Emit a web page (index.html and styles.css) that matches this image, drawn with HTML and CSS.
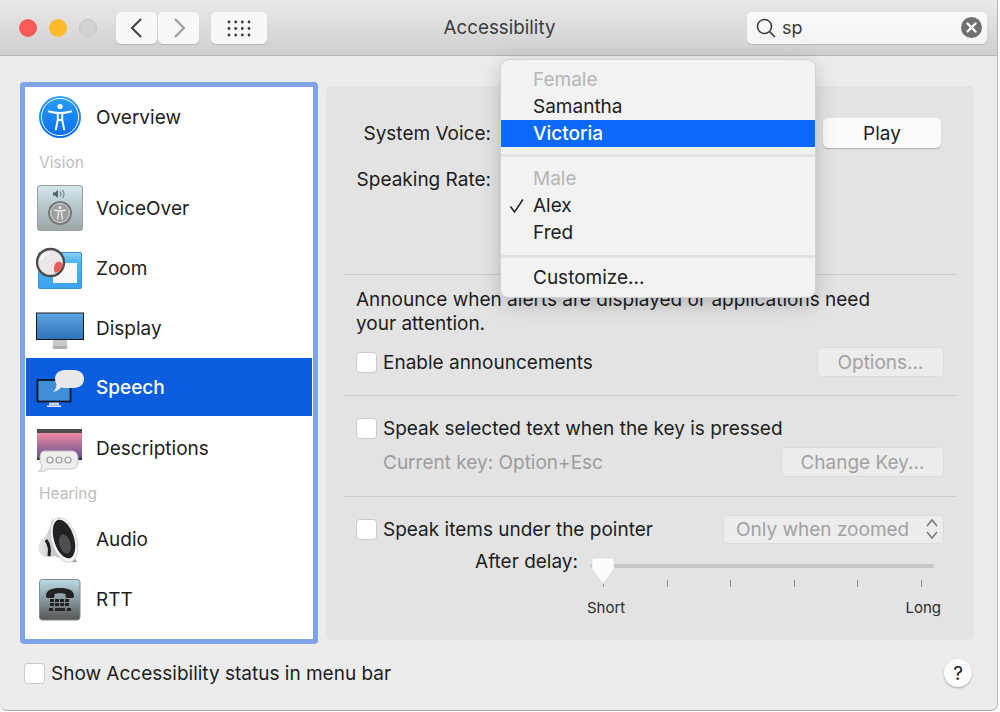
FILE: index.html
```html
<!DOCTYPE html>
<html lang="en">
<head>
<meta charset="utf-8">
<title>Accessibility</title>
<link rel="stylesheet" href="styles.css">
</head>
<body>
<div class="window">
  <header class="toolbar">
    <div class="lights"><span class="light red"></span><span class="light yellow"></span><span class="light gray"></span></div>
    <div class="nav">
      <button class="tool nav-btn"><svg width="16" height="22" viewBox="0 0 16 22"><path d="M12 2 3 11l9 9" class="chev"/></svg></button>
      <button class="tool nav-btn"><svg width="16" height="22" viewBox="0 0 16 22"><path d="M4 2l9 9-9 9" class="chev dim"/></svg></button>
    </div>
    <button class="tool grid-btn"><svg width="26" height="18" viewBox="0 0 26 18" class="dots"><circle cx="3" cy="3" r="1.4"/><circle cx="9.7" cy="3" r="1.4"/><circle cx="16.3" cy="3" r="1.4"/><circle cx="23" cy="3" r="1.4"/><circle cx="3" cy="9.5" r="1.4"/><circle cx="9.7" cy="9.5" r="1.4"/><circle cx="16.3" cy="9.5" r="1.4"/><circle cx="23" cy="9.5" r="1.4"/><circle cx="3" cy="16" r="1.4"/><circle cx="9.7" cy="16" r="1.4"/><circle cx="16.3" cy="16" r="1.4"/><circle cx="23" cy="16" r="1.4"/></svg></button>
    <div class="title">Accessibility</div>
    <div class="search">
      <svg width="22" height="22" viewBox="0 0 22 22"><circle cx="9.5" cy="9.5" r="7" class="lens"/><path d="M14.6 14.6 20 20" class="lens"/></svg>
      <span class="query">sp</span>
      <svg class="clear" width="21" height="21" viewBox="0 0 21 21"><circle cx="10.5" cy="10.5" r="10.5" fill="#6f6f6f"/><path d="M6.5 6.5l8 8M14.5 6.5l-8 8" stroke="#fff" stroke-width="2.4" stroke-linecap="round"/></svg>
    </div>
  </header>

  <main class="main">
    <nav class="sidebar">
      <div class="row">
        <svg class="icon" width="48" height="48" viewBox="0 0 48 48"><defs><linearGradient id="ov" x1="0" y1="0" x2="0" y2="1"><stop offset="0" stop-color="#2aa0f5"/><stop offset="1" stop-color="#0a6cf0"/></linearGradient></defs><circle cx="24" cy="24" r="21" fill="url(#ov)"/><circle cx="24" cy="24" r="18.6" fill="none" stroke="#fff" stroke-width="1"/><circle cx="24" cy="13.5" r="2.6" fill="#fff"/><path d="M13 18.500c4 1 7.500 1.500 11 1.500s7-.5 11-1.500M21.800 20v7l-2 9.500M26.200 20v7l2 9.500M21.800 27h4.400" fill="none" stroke="#fff" stroke-width="2" stroke-linecap="round"/></svg>
        <span>Overview</span>
      </div>
      <div class="group">Vision</div>
      <div class="row">
        <svg class="icon" width="48" height="48" viewBox="0 0 48 48"><defs><linearGradient id="vo" x1="0" y1="0" x2="0" y2="1"><stop offset="0" stop-color="#d3e5ec"/><stop offset="1" stop-color="#9aa5a8"/></linearGradient></defs><rect x="1.500" y="1.500" width="45" height="45" rx="2.500" fill="url(#vo)" stroke="#9a9fa1"/><path d="M17 8.500h2l3-2.500v8l-3-2.500h-2z" fill="#55626a"/><path d="M24 7.500a4 4 0 0 1 0 5M26.500 6a6.500 6.500 0 0 1 0 8" fill="none" stroke="#66737a"/><circle cx="24" cy="29" r="12" fill="#77797a"/><circle cx="24" cy="29" r="9.500" fill="#9b9d9e" stroke="#d8dadb"/><circle cx="24" cy="23.500" r="1.500" fill="#e8e8e8"/><path d="M18 26c4 1 8 1 12 0M22.500 27v3l-1 5.500M25.500 27v3l1 5.500" fill="none" stroke="#e8e8e8" stroke-width="1.400"/></svg>
        <span>VoiceOver</span>
      </div>
      <div class="row">
        <svg class="icon" width="48" height="48" viewBox="0 0 48 48"><defs><linearGradient id="zo" x1="0" y1="0" x2="0" y2="1"><stop offset="0" stop-color="#8fd0f4"/><stop offset=".25" stop-color="#52b5f2"/><stop offset="1" stop-color="#3aa2ec"/></linearGradient></defs><rect x="2.500" y="8.500" width="43" height="36" rx="1.500" fill="url(#zo)" stroke="#3590d4"/><rect x="17" y="19" width="24" height="20" fill="#f6f7f8"/><circle cx="14.500" cy="18.500" r="13.500" fill="#ebe6ea" stroke="#4c4c4c" stroke-width="2.400"/><path d="M21 18c4-1 6 1 5 5-1 3-3 5-7 6-2-4-1-9 2-11z" fill="#ea5b5b"/><path d="M5 16a10 10 0 0 1 8-7" fill="none" stroke="#fff" stroke-width="2"/></svg>
        <span>Zoom</span>
      </div>
      <div class="row">
        <svg class="icon" width="48" height="48" viewBox="0 0 48 48"><defs><linearGradient id="di" x1="0" y1="0" x2="0" y2="1"><stop offset="0" stop-color="#5ba6e4"/><stop offset="1" stop-color="#2f72b5"/></linearGradient></defs><rect x="0.500" y="9" width="47" height="26.500" fill="url(#di)" stroke="#16181c"/><rect x="17" y="36" width="14" height="9" fill="#c8c8c8"/><rect x="17" y="42" width="14" height="3" fill="#b0b0b0"/></svg>
        <span>Display</span>
      </div>
      <div class="row selected">
        <svg class="icon" width="48" height="48" viewBox="0 0 48 48"><rect x="1.500" y="16" width="33" height="21.500" fill="#3f8fd8" stroke="#0b1626" stroke-width="1.800"/><rect x="13" y="38.500" width="10" height="3" fill="#c6d3e6"/><rect x="11" y="41.500" width="14" height="1.500" fill="#e0e6f0"/><path d="M29 6h9c6 0 10 3.500 10 9s-4 9-10 9h-9c-1.500 0-3-.2-4-.7-1.500 2-4.500 4.200-8 4.700 2-2 3.500-4.500 3.500-7.500-.5-1.500-1.500-3.500-1.500-5.500C19 9.500 23 6 29 6z" fill="#e8e9ec"/></svg>
        <span>Speech</span>
      </div>
      <div class="row">
        <svg class="icon" width="48" height="48" viewBox="0 0 48 48"><defs><linearGradient id="de" x1="0" y1="0" x2="0" y2="1"><stop offset="0" stop-color="#f08aa0"/><stop offset="1" stop-color="#5e4f93"/></linearGradient></defs><rect x="1" y="5" width="45" height="4" fill="#4c4a4c"/><rect x="1" y="9" width="45" height="26" fill="url(#de)"/><rect x="1" y="34" width="45" height="2" fill="#2c2a30"/><path d="M9 27h27c4 0 6 3 6 9s-2 9-6 9H12c-3 2-7 3-10 3 2-1.500 3.500-3 4-5.500-1-2-2-4-2-6.500 0-6 1-9 5-9z" fill="#eeeeee" stroke="#c4c4c4"/><circle cx="14" cy="36" r="3" fill="none" stroke="#9a9a9a" stroke-width="1.200"/><circle cx="23" cy="36" r="3" fill="none" stroke="#9a9a9a" stroke-width="1.200"/><circle cx="32" cy="36" r="3" fill="none" stroke="#9a9a9a" stroke-width="1.200"/></svg>
        <span>Descriptions</span>
      </div>
      <div class="group hearing">Hearing</div>
      <div class="row">
        <svg class="icon" width="48" height="48" viewBox="0 0 48 48"><defs><linearGradient id="au" x1="0" y1="0" x2="1" y2="0"><stop offset="0" stop-color="#e8e8ea"/><stop offset="1" stop-color="#9a9ba0"/></linearGradient></defs><path d="M16 3C15 13 11 20 4 27c-3 4-2 11 3 14 4 2 9 1 12 0 6 3 14 7 22 6z" fill="url(#au)"/><path d="M10 25c3 4 4 10 3 16" fill="none" stroke="#1e1e20" stroke-width="3"/><ellipse cx="28" cy="25" rx="12.500" ry="23" transform="rotate(-17 28 25)" fill="#f5f5f7" stroke="#c8c8cc" stroke-width=".8"/><ellipse cx="28" cy="24" rx="10" ry="20" transform="rotate(-17 28 24)" fill="#212226"/><ellipse cx="29" cy="29" rx="5.500" ry="10" transform="rotate(-17 29 29)" fill="#4d4e54"/></svg>
        <span>Audio</span>
      </div>
      <div class="row">
        <svg class="icon" width="48" height="48" viewBox="0 0 48 48"><defs><linearGradient id="rt" x1="0" y1="0" x2="0" y2="1"><stop offset="0" stop-color="#b9dbe8"/><stop offset="1" stop-color="#555"/></linearGradient></defs><rect x="3.500" y="4.500" width="40.500" height="40.500" rx="3" fill="url(#rt)" stroke="#7c8a90"/><path d="M10 21c0-6 6-8 14-8s14 2 14 8c0 1.500-1 2-2.500 2h-4c-1.500 0-2-1-2-2v-2c-3-1-8-1-11 0v2c0 1-.5 2-2 2h-4C11 23 10 22.500 10 21z" fill="#222"/><g fill="#222"><rect x="14" y="24" width="4" height="3"/><rect x="19" y="24" width="4" height="3"/><rect x="24" y="24" width="4" height="3"/><rect x="29" y="24" width="4" height="3"/><rect x="14" y="28" width="4" height="3"/><rect x="19" y="28" width="4" height="3"/><rect x="24" y="28" width="4" height="3"/><rect x="29" y="28" width="4" height="3"/><rect x="13" y="33" width="4" height="3"/><rect x="19" y="33" width="10" height="3"/><rect x="31" y="33" width="4" height="3"/></g></svg>
        <span>RTT</span>
      </div>
    </nav>

    <section class="panel">
      <div class="section voice">
        <div class="form-row">
          <span class="form-label">System Voice:</span>
          <button class="btn play">Play</button>
        </div>
        <div class="form-row rate">
          <span class="form-label">Speaking Rate:</span>
        </div>
      </div>

      <div class="section announce">
        <p class="note">Announce when alerts are displayed or applications need<br>your attention.</p>
        <div class="check-row spaced">
          <span class="check"></span><span>Enable announcements</span>
          <button class="btn off options">Options...</button>
        </div>
      </div>

      <div class="section selected-text">
        <div class="check-row"><span class="check"></span><span>Speak selected text when the key is pressed</span></div>
        <div class="key-row">
          <span class="muted">Current key: Option+Esc</span>
          <button class="btn off change">Change Key...</button>
        </div>
      </div>

      <div class="section pointer">
        <div class="check-row">
          <span class="check"></span><span>Speak items under the pointer</span>
          <div class="select"><span>Only when zoomed</span><svg width="14" height="24" viewBox="0 0 14 24"><path d="M2 9l5-6 5 6M2 15l5 6 5-6" fill="none" stroke="#7c7c7c" stroke-width="1.600"/></svg></div>
        </div>
        <div class="delay-row">
          <span class="delay-label">After delay:</span>
          <div class="slider">
            <div class="track"></div>
            <svg class="thumb" width="24" height="28" viewBox="0 0 24 28"><path d="M3 1h18a2 2 0 0 1 2 2v9L12 27 1 12V3a2 2 0 0 1 2-2z" fill="#fcfcfc" stroke="#d8d8d8" stroke-width=".6"/></svg>
            <div class="ticks"><i></i><i></i><i></i><i></i><i></i><i></i></div>
            <div class="ends"><span>Short</span><span>Long</span></div>
          </div>
        </div>
      </div>
    </section>
  </main>

  <footer class="footer">
    <span class="check"></span><span>Show Accessibility status in menu bar</span>
    <button class="help">?</button>
  </footer>

  <div class="menu">
    <div class="item head">Female</div>
    <div class="item">Samantha</div>
    <div class="item active">Victoria</div>
    <div class="sep"></div>
    <div class="item head">Male</div>
    <div class="item"><svg class="tick" width="16" height="16" viewBox="0 0 16 16"><path d="M1.500 8.500l4 5.500L14 1.500" fill="none" stroke="#222" stroke-width="1.500"/></svg>Alex</div>
    <div class="item">Fred</div>
    <div class="sep second"></div>
    <div class="item">Customize...</div>
  </div>
</div>
</body>
</html>
```

FILE: styles.css
```css
* { box-sizing: border-box; }
html, body { margin: 0; padding: 0; background: #fff; }
body { font-family: Inter, "Liberation Sans", sans-serif; font-size: 19px; color: #1d1d1d; }
button { font-family: inherit; font-size: inherit; color: inherit; border: 0; padding: 0; }

.window {
  position: relative;
  width: 998px;
  height: 711px;
  display: flex;
  flex-direction: column;
  background: #ececec;
  border-right: 1px solid #b9b9b9;
  border-bottom: 1px solid #a9a9a9;
  border-radius: 0 0 7px 7px;
  overflow: hidden;
}

.toolbar {
  height: 56px;
  flex: none;
  display: flex;
  align-items: center;
  padding: 0 10px 0 19px;
  background: linear-gradient(#e9e9e9, #cfcfcf);
  border-bottom: 1px solid #b4b4b4;
  position: relative;
}
.lights { display: flex; gap: 12px; }
.light { width: 18px; height: 18px; border-radius: 50%; }
.red { background: #fb5a56; }
.yellow { background: #fdbb2c; }
.gray { background: #d2d2d2; border: 1px solid #c4c4c4; }
.nav { display: flex; gap: 1px; margin-left: 19px; }
.tool {
  height: 32px;
  background: #f8f8f8;
  border-radius: 5px;
  box-shadow: 0 1px 1px #b4b4b4;
  display: flex;
  align-items: center;
  justify-content: center;
}
.nav-btn { width: 41px; }
.grid-btn { width: 56px; margin-left: 12px; }
.chev { fill: none; stroke: #3f3f3f; stroke-width: 2; }
.chev.dim { stroke: #9b9b9b; }
.dots { fill: #3a3a3a; overflow: visible; }
.title {
  position: absolute;
  left: 0;
  right: 0;
  padding-left: 2px;
  text-align: center;
  pointer-events: none;
  font-size: 18.800px;
  color: #3b3b3b;
}
.search {
  margin-left: auto;
  width: 240px;
  height: 32px;
  background: linear-gradient(#fafafa, #f4f4f4);
  border-radius: 5px;
  box-shadow: 0 1px 1px #b4b4b4;
  display: flex;
  align-items: center;
  padding: 0 5px 0 8px;
}
.lens { fill: none; stroke: #3c3c3c; stroke-width: 1.600; }
.query { margin-left: 5px; color: #3a3a3a; font-size: 18px; }
.clear { margin-left: auto; }

.main {
  flex: none;
  display: grid;
  grid-template-columns: 298px 648px;
  column-gap: 8px;
  padding: 26px 0 0 20px;
}

.sidebar {
  height: 562px;
  background: #fff;
  border: 5px solid #80a4ec;
  border-radius: 4px;
}
.row {
  height: 60px;
  display: flex;
  align-items: center;
  padding-left: 11px;
  gap: 12px;
}
.row.selected {
  height: 58px;
  margin: 0 1px 2px;
  padding: 1px 0 0 10px;
  background: #0a5ddc;
  color: #fff;
  font-weight: 500;
}
.icon { flex: none; }
.group { height: 31px; line-height: 31px; padding-left: 14px; font-size: 15.500px; color: #bdbdbd; }

.panel {
  height: 554px;
  margin-top: 4px;
  padding: 0 17px 0 18px;
  background: #e3e3e3;
  border-radius: 5px;
}
.section { border-bottom: 1px solid #cdcdcd; padding-left: 12px; padding-right: 13px; }
.section.voice { height: 189px; padding-top: 32px; padding-left: 0; padding-right: 16px; }
.section.announce { height: 121px; padding-top: 13px; }
.section.selected-text { height: 101px; padding-top: 20px; }
.section.pointer { border-bottom: 0; padding-top: 17px; }
.form-row { display: flex; align-items: center; height: 30px; }
.form-row.rate { margin-top: 16px; }
.form-label { width: 147px; text-align: right; }
.note { margin: 0; line-height: 24px; }
.check-row { display: flex; align-items: center; height: 24px; }
.check-row.spaced { height: 30px; margin-top: 11px; }
.section.pointer .check-row { height: 30px; }
.check {
  flex: none;
  width: 21px;
  height: 21px;
  margin-right: 6px;
  border-radius: 4px;
  background: #fff;
  box-shadow: inset 0 0 0 1px #cbcbcb;
}
.key-row { display: flex; align-items: center; height: 30px; margin-top: 7px; padding-left: 27px; }
.muted { color: #9c9c9c; }
.btn {
  height: 30px;
  flex: none;
  margin-left: auto;
  background: #fbfbfb;
  border-radius: 5px;
  box-shadow: 0 1px 1px #aeaeae;
  text-align: center;
}
.btn.play { width: 118px; }
.btn.off {
  background: #ececec;
  color: #a2a2a2;
  box-shadow: inset 0 0 0 1px #dbdbdb;
}
.btn.options { width: 127px; }
.btn.change { width: 163px; }
.select {
  margin-left: auto;
  width: 221px;
  height: 29px;
  display: flex;
  align-items: center;
  justify-content: space-between;
  padding: 0 5px 0 13px;
  background: #ececec;
  color: #a2a2a2;
  border-radius: 5px;
  box-shadow: inset 0 0 0 1px #dbdbdb;
}
.delay-row { display: flex; margin-top: 2px; }
.delay-label { width: 222px; height: 32px; line-height: 32px; text-align: right; }
.slider { position: relative; width: 344px; margin-left: 12px; padding-top: 18px; }
.track { height: 4px; background: #c6c6c6; border-radius: 2px; }
.thumb { position: absolute; left: 1px; top: 11px; }
.ticks { display: flex; justify-content: space-between; height: 7px; margin-top: 12px; padding: 0 12px 0 13px; }
.ticks i { width: 1px; background: #8d8d8d; }
.ends {
  display: flex;
  justify-content: space-between;
  margin: 12px -7px 0 -3px;
  font-size: 15px;
  line-height: 17px;
  color: #2c2c2c;
}

.footer {
  flex: 1;
  display: flex;
  align-items: center;
  padding: 0 25px 8px 24px;
}
.help {
  margin-left: auto;
  width: 28px;
  height: 28px;
  border-radius: 50%;
  background: #fdfdfd;
  box-shadow: 0 1px 2px #9f9f9f;
  font-size: 19px;
}

.menu {
  position: absolute;
  left: 501px;
  top: 60px;
  width: 314px;
  height: 237px;
  padding-top: 6px;
  background: #f2f2f2;
  border-radius: 8px;
  box-shadow: 0 0 0 1px #d2d2d2, 0 6px 22px rgba(0, 0, 0, .22);
  color: #202020;
}
.item { position: relative; height: 27px; line-height: 27px; padding-left: 32px; }
.item.head { color: #b5b5b5; }
.item.active { background: #0a69fb; color: #fff; font-weight: 500; }
.sep { height: 3px; margin: 7px 0 8px; background: #e2e2e2; }
.sep.second { margin: 9px 0 6px; }
.tick { position: absolute; left: 8px; top: 6px; }
```
